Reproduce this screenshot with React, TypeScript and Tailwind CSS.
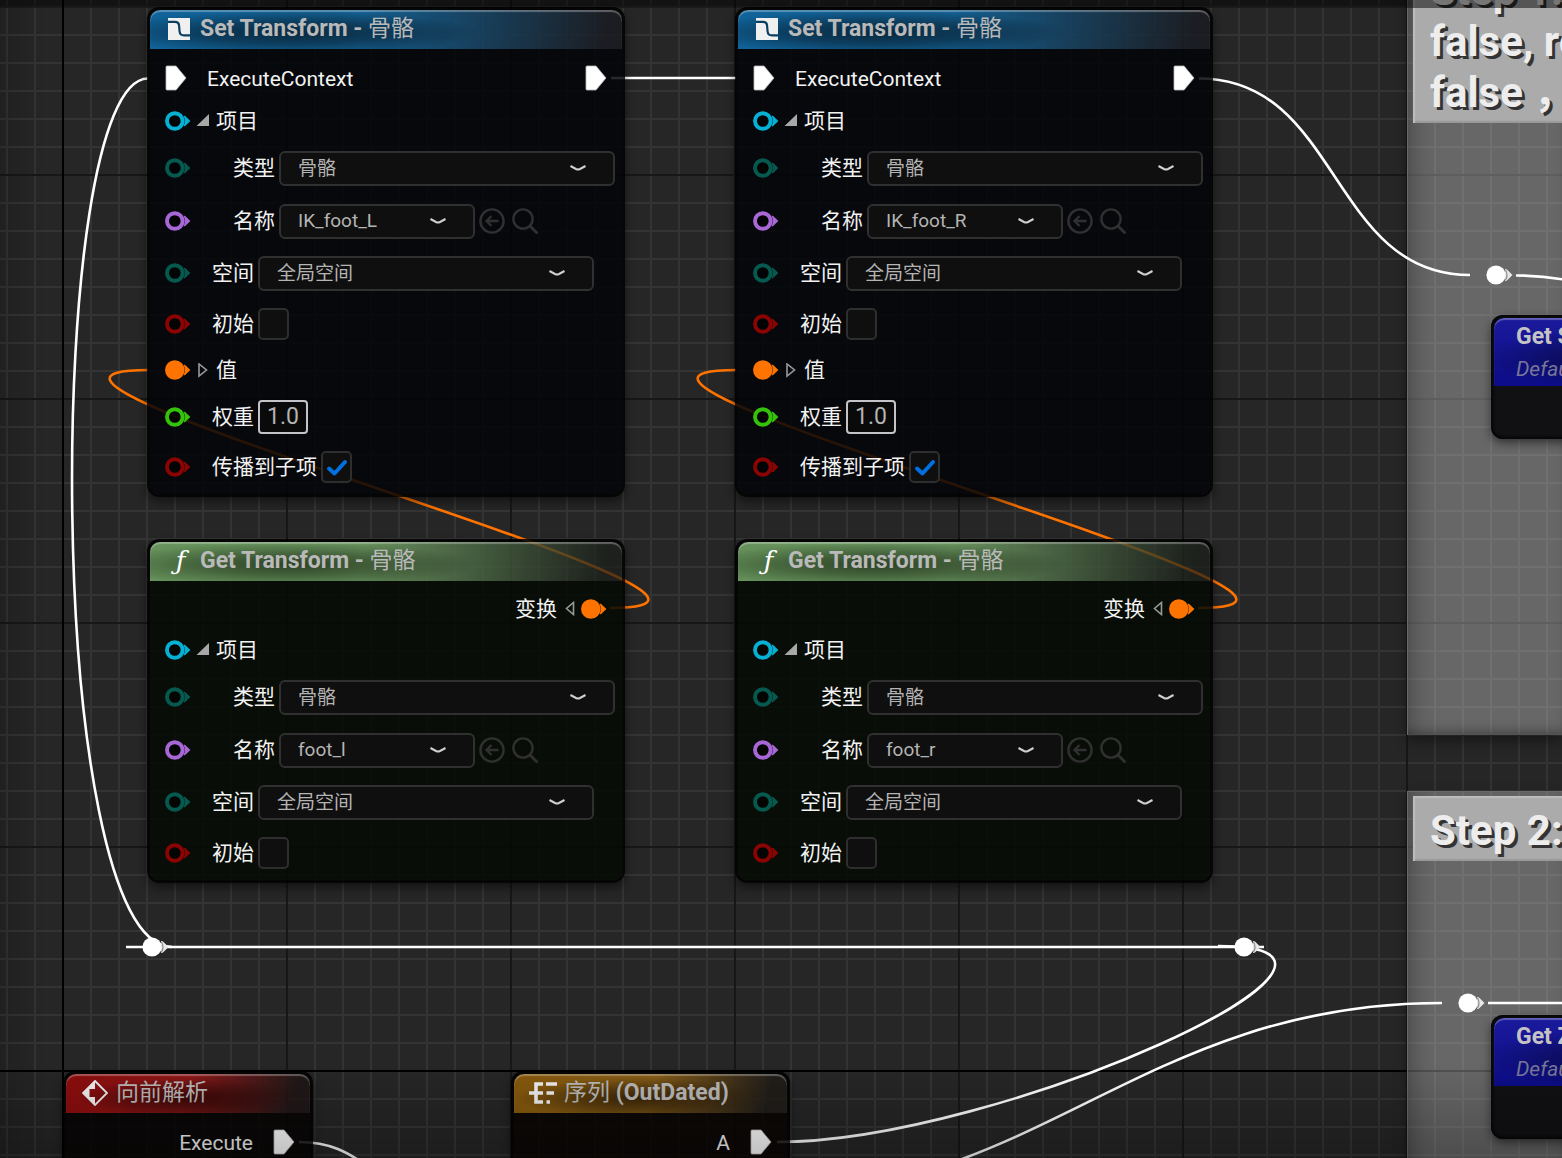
import { useId } from 'react'
import type { ReactNode } from 'react'

type PinColor = 'struct' | 'enum' | 'name' | 'bool' | 'transform' | 'float'

const pinColors: Record<PinColor, string> = {
  struct: 'text-[#06b0d4]',
  enum: 'text-[#06594f]',
  name: 'text-[#a867d6]',
  bool: 'text-[#8a0404]',
  transform: 'text-[#ff7300]',
  float: 'text-[#35c20a]',
}

function Pin({ color, filled = false }: { color: PinColor; filled?: boolean }) {
  return (
    <svg className={`h-[20px] w-[26px] shrink-0 ${pinColors[color]}`} viewBox="0 0 26 20" aria-hidden="true">
      <circle cx="9.8" cy="10" r="7.8" fill={filled ? 'currentColor' : 'rgba(0,0,0,0.6)'} stroke="currentColor" strokeWidth="3.9" />
      <path d="M18.6 4.6 L20.2 4.9 L25.4 10 L20.2 15.1 L18.6 15.4 Q20.8 10 18.6 4.6Z" fill="currentColor" />
    </svg>
  )
}

function ExecPin() {
  return (
    <svg className="h-[26px] w-[22px] shrink-0" viewBox="0 0 22 26" aria-hidden="true">
      <path d="M2 1 H11 L21 13 L11 25 H2 Q1 25 1 24 V2 Q1 1 2 1Z" fill="#fff" stroke="#bbb" strokeWidth="0.8" />
    </svg>
  )
}

function Chevron() {
  return (
    <svg className="pointer-events-none absolute top-1/2 right-[28px] h-[8px] w-[18px] -translate-y-1/2" viewBox="0 0 18 8" aria-hidden="true">
      <path d="M1.5 2 L7 5 Q9 6 11 5 L16.5 2" fill="none" stroke="#d0d0d0" strokeWidth="2" />
    </svg>
  )
}

function Row({ height, children }: { height: string; children: ReactNode }) {
  return <div className={`flex items-center px-[15px] whitespace-nowrap ${height}`}>{children}</div>
}

interface SelectRowProps {
  height: string
  pin: PinColor
  label: string
  value: string
  nested?: boolean
  picker?: boolean
}

function SelectRow({ height, pin, label, value, nested, picker }: SelectRowProps) {
  const id = useId()
  return (
    <Row height={height}>
      <Pin color={pin} />
      <label htmlFor={id} className={nested ? 'ml-[42px]' : 'ml-[21px]'}>
        {label}
      </label>
      <div className={`relative ml-[4px] h-[35px] shrink-0 ${picker ? 'w-[196px]' : 'w-[336px]'}`}>
        <select
          id={id}
          defaultValue={value}
          className={`h-full w-full appearance-none rounded-md border-2 border-[#303030] bg-[#0f0f0f] pl-[17px] text-[19px] text-[#b4b4b4] ${picker ? '' : 'pt-[2px]'}`}
        >
          <option>{value}</option>
        </select>
        <Chevron />
      </div>
      {picker && (
        <>
          <button type="button" aria-label="Use selected" className="ml-[4px] text-[#303030]">
            <svg className="h-[26px] w-[26px]" viewBox="0 0 26 26" fill="none" stroke="currentColor" strokeWidth="2.4">
              <circle cx="13" cy="13" r="11.6" />
              <path d="M19.5 13 H7.5 M12.5 8 L7.5 13 L12.5 18" />
            </svg>
          </button>
          <button type="button" aria-label="Browse" className="ml-[7px] text-[#303030]">
            <svg className="h-[26px] w-[26px]" viewBox="0 0 26 26" fill="none" stroke="currentColor" strokeWidth="2.4">
              <circle cx="11" cy="11" r="9.6" />
              <path d="M18 18 L25.5 25.5" strokeWidth="2.8" />
            </svg>
          </button>
        </>
      )}
    </Row>
  )
}

function CheckRow({ height, label, checked = false }: { height: string; label: string; checked?: boolean }) {
  const id = useId()
  return (
    <Row height={height}>
      <Pin color="bool" />
      <label htmlFor={id} className="ml-[21px]">
        {label}
      </label>
      <div className="relative ml-[4px] h-[32px] w-[31px]">
        <input
          id={id}
          type="checkbox"
          defaultChecked={checked}
          className="peer block h-full w-full appearance-none rounded-[5px] border-2 border-[#2e2e2e] bg-[#0f0f0f]"
        />
        <svg
          className="pointer-events-none absolute inset-0 hidden h-full w-full peer-checked:block"
          viewBox="0 0 31 32"
          fill="none"
          stroke="#0070e0"
          strokeWidth="4"
          strokeLinecap="round"
          strokeLinejoin="round"
        >
          <path d="M8 17.5 L13.5 22.5 L24 11" />
        </svg>
      </div>
    </Row>
  )
}

function ItemRow() {
  return (
    <Row height="h-[41px]">
      <Pin color="struct" />
      <button type="button" aria-label="Collapse" className="ml-[5px]">
        <svg className="h-[14px] w-[14px]" viewBox="0 0 14 14">
          <path d="M13 0 V12 H0.5Z" fill="#a8a8a8" />
        </svg>
      </button>
      <span className="ml-[6px]">项目</span>
    </Row>
  )
}

function ItemFields({ name }: { name: string }) {
  return (
    <>
      <ItemRow />
      <SelectRow height="h-[54px]" pin="enum" label="类型" value="骨骼" nested />
      <SelectRow height="h-[52px]" pin="name" label="名称" value={name} nested picker />
      <SelectRow height="h-[52px]" pin="enum" label="空间" value="全局空间" />
      <CheckRow height="h-[50px]" label="初始" />
    </>
  )
}

const headerColors = {
  blue: 'bg-[radial-gradient(ellipse_40%_56%_at_30%_58%,rgba(5,18,28,0.7),rgba(5,18,28,0.45)_50%,transparent),linear-gradient(100deg,#10639a_0%,#145f90_45%,rgba(26,28,34,0.85)_96%)]',
  green:
    'bg-[radial-gradient(ellipse_40%_56%_at_30%_58%,rgba(20,34,14,0.7),rgba(20,34,14,0.4)_50%,transparent),linear-gradient(100deg,#65915a_0%,#668f5c_45%,rgba(26,30,25,0.7)_96%)]',
  red: 'bg-[radial-gradient(ellipse_46%_52%_at_50%_62%,rgba(40,4,4,0.8),rgba(40,4,4,0.45)_50%,transparent),linear-gradient(105deg,#8c0c0c_0%,#8c1818_50%,rgba(32,22,22,0.85)_92%)]',
  gold: 'bg-[radial-gradient(ellipse_46%_52%_at_46%_62%,rgba(40,24,4,0.8),rgba(40,24,4,0.45)_50%,transparent),linear-gradient(105deg,#86590c_0%,#855c18_50%,rgba(32,28,24,0.85)_92%)]',
}

const bodyColors = {
  blue: 'bg-[#010408]/85',
  green: 'bg-[#040902]/85',
  red: 'bg-[#060202]/85',
  gold: 'bg-[#080401]/85',
}

interface NodeProps {
  place: string
  color: keyof typeof headerColors
  icon: ReactNode
  title: ReactNode
  children: ReactNode
}

function GraphNode({ place, color, icon, title, children }: NodeProps) {
  return (
    <section className={`absolute rounded-xl border-[3px] border-black/85 shadow-[0_5px_10px_rgba(0,0,0,0.45)] ${place}`}>
      <header
        className={`flex h-[39px] items-center rounded-t-[10px] pb-[2px] pl-[17px] shadow-[inset_0_2px_1px_rgba(255,255,255,0.3)] ${headerColors[color]}`}
      >
        <span className="flex w-[27px] shrink-0 items-center">{icon}</span>
        <h2 className="ml-[6px] text-[23px] font-bold whitespace-nowrap text-[#b9b9b9]">{title}</h2>
      </header>
      <div className={`rounded-b-[9px] pt-[7px] ${bodyColors[color]}`}>{children}</div>
    </section>
  )
}

function TransformIcon() {
  return (
    <svg className="ml-[1px] h-[22px] w-[22px]" viewBox="0 0 22 22">
      <path d="M0 0 H22 V22 H0Z" fill="#f0f0f0" />
      <path d="M0 3.8 H7 Q10.6 3.8 11 7 L11.6 13.5 Q12 17.4 16 17.4 H22" fill="none" stroke="#0c3f60" strokeWidth="2.2" />
    </svg>
  )
}

function FunctionIcon() {
  return <span className="w-full text-center font-['DejaVu_Serif'] text-[26px] leading-none text-white italic">ƒ</span>
}

function DiamondIcon() {
  return (
    <svg className="-ml-[1px] h-[26px] w-[26px]" viewBox="0 0 26 26">
      <path d="M13 1 L25 13 L13 25 L1 13Z" fill="none" stroke="#f0f0f0" strokeWidth="1.8" />
      <path d="M13 1 L1 13 L13 25 V17 H7.5 V9 H13Z" fill="#f0f0f0" />
    </svg>
  )
}

function SequenceIcon() {
  return (
    <svg className="-ml-[2px] h-[22px] w-[28px] shrink-0" viewBox="0 0 28 22" fill="none" stroke="#f0f0f0" strokeWidth="3.6">
      <path d="M0 11 H14 M14 2 H7 V20 H14 M17 2 H28 M17.5 11 H25 M17.5 20 H21" />
    </svg>
  )
}

function SetTransformNode({ place, name }: { place: string; name: string }) {
  const weightId = useId()
  return (
    <GraphNode
      place={place}
      color="blue"
      icon={<TransformIcon />}
      title={
        <>
          Set Transform - <span className="font-normal">骨骼</span>
        </>
      }
    >
      <Row height="h-[44px]">
        <ExecPin />
        <span className="ml-[20px] pt-[2px]">ExecuteContext</span>
        <span className="ml-auto flex">
          <ExecPin />
        </span>
      </Row>
      <ItemFields name={name} />
      <Row height="h-[42px]">
        <Pin color="transform" filled />
        <button type="button" aria-label="Expand" className="ml-[6px]">
          <svg className="h-[15px] w-[13px]" viewBox="0 0 13 15">
            <path d="M2 1 V13 L9.5 7Z" fill="none" stroke="#999" strokeWidth="1.6" />
          </svg>
        </button>
        <span className="ml-[6px]">值</span>
      </Row>
      <Row height="h-[52px]">
        <Pin color="float" />
        <label htmlFor={weightId} className="ml-[21px]">
          权重
        </label>
        <input
          id={weightId}
          type="text"
          defaultValue="1.0"
          className="ml-[4px] h-[34px] w-[50px] rounded-[4px] border-2 border-[#c4c4c8] bg-[#0a0a0a] pb-[2px] text-center text-[23px] text-[#b4b4b4]"
        />
      </Row>
      <CheckRow height="h-[48px]" label="传播到子项" checked />
      <div className="h-[3px]" />
    </GraphNode>
  )
}

function GetTransformNode({ place, name }: { place: string; name: string }) {
  return (
    <GraphNode
      place={place}
      color="green"
      icon={<FunctionIcon />}
      title={
        <>
          Get Transform - <span className="font-normal">骨骼</span>
        </>
      }
    >
      <Row height="h-[41px]">
        <span className="ml-auto">变换</span>
        <button type="button" aria-label="Expand" className="mr-[5px] ml-[6px]">
          <svg className="h-[15px] w-[13px]" viewBox="0 0 13 15">
            <path d="M10.5 1.5 V13.5 L3.5 7.5Z" fill="none" stroke="#999" strokeWidth="1.6" />
          </svg>
        </button>
        <Pin color="transform" filled />
      </Row>
      <ItemFields name={name} />
      <div className="h-[2px]" />
    </GraphNode>
  )
}

function VariableNode({ place, title }: { place: string; title: string }) {
  return (
    <section className={`absolute w-[300px] rounded-xl bg-[#111114] p-[3px] pb-[53px] shadow-[inset_0_0_3px_2px_#050508,0_4px_10px_rgba(0,0,0,0.5)] ${place}`}>
      <header className="h-[68px] rounded-t-[10px] bg-[radial-gradient(ellipse_50%_45%_at_46%_60%,rgba(8,8,50,0.9),transparent),linear-gradient(#1a1a9c,#0c0c88)] pt-[3px] pl-[22px] whitespace-nowrap shadow-[inset_0_2px_1px_rgba(255,255,255,0.3)]">
        <h2 className="text-[23px] leading-[32px] font-bold text-[#c4c4c4]">{title}</h2>
        <p className="text-[21px] leading-[33px] text-[#77779a] italic">Default</p>
      </header>
    </section>
  )
}

function CommentBox({ place, children }: { place: string; children: ReactNode }) {
  return (
    <section className={`absolute right-0 left-[1407px] border-t border-l border-[#6a6a6a] bg-[#cbcbcb]/40 pt-[4px] pl-[5px] shadow-[inset_16px_0_24px_-10px_rgba(0,0,0,0.25),inset_0_-8px_12px_-6px_rgba(0,0,0,0.35),0_6px_12px_rgba(0,0,0,0.4)] ${place}`}>
      <h1 className="overflow-hidden bg-[#ababab] pt-[9px] pb-[5px] pl-[17px] text-[42px] leading-[51px] font-bold whitespace-pre text-[#ededed] shadow-[inset_2px_2px_1px_#bdbdbd,inset_0_-2px_1px_#999] [text-shadow:3px_3px_0_#333]">
        {children}
      </h1>
    </section>
  )
}

function Reroute({ x, y }: { x: number; y: number }) {
  return (
    <g fill="#fff">
      <circle cx={x} cy={y} r="9.6" />
      <path d={`M${x + 9} ${y - 6} L${x + 11} ${y - 5.5} L${x + 16.5} ${y} L${x + 11} ${y + 5.5} L${x + 9} ${y + 6}Z`} fill="#e8e8e8" />
      <path d={`M${x + 9.5} ${y - 5} Q${x + 12.5} ${y} ${x + 9.5} ${y + 5}`} fill="none" stroke="#8a8a8a" strokeWidth="1.2" />
    </g>
  )
}

function Wires() {
  return (
    <svg className="absolute inset-0 h-full w-full" fill="none" strokeWidth="2.6" aria-hidden="true">
      <g stroke="#fff">
        <path d="M611 78 H736" />
        <path d="M1199 78.5 C1340 78.5 1330 275 1470 275" />
        <path d="M1516 275.5 Q1542 275.5 1566 280" />
        <path d="M148 78.5 C43 78.5 43 947 172 947" />
        <path d="M126 947 H1264" />
        <path d="M777 1142 C1000 1142 1430 946 1218 946" />
        <path d="M777 1194 C1040 1192 1145 1003 1442 1003" />
        <path d="M1488 1003 H1600" />
        <path d="M299 1142 C330 1142 348 1152 370 1168" />
      </g>
      <g stroke="#ff7300">
        <path d="M148 370 C-87 370 845 608 610 608" />
        <path d="M736 370 C501 370 1433 608 1198 608" />
      </g>
      <Reroute x={152} y={947} />
      <Reroute x={1244} y={947} />
      <Reroute x={1496} y={275} />
      <Reroute x={1468} y={1003} />
    </svg>
  )
}

function Grid() {
  return (
    <svg className="absolute inset-0 h-full w-full" aria-hidden="true">
      <defs>
        <pattern id="minor" x="8" y="8" width="28" height="28" patternUnits="userSpaceOnUse">
          <path d="M0 27 H28 M27 0 V28" stroke="#343434" strokeWidth="2" />
        </pattern>
        <pattern id="major" x="64" y="176" width="224" height="224" patternUnits="userSpaceOnUse">
          <path d="M0 223 H224 M223 0 V224" stroke="#171717" strokeWidth="2" />
        </pattern>
      </defs>
      <rect width="100%" height="100%" fill="#262626" />
      <rect width="100%" height="100%" fill="url(#minor)" />
      <rect width="100%" height="100%" fill="url(#major)" />
      <path d="M63 0 V4000 M0 1071 H4000" stroke="#000" strokeWidth="2" />
    </svg>
  )
}

export default function App() {
  return (
    <main className="relative h-screen overflow-hidden bg-[#262626] font-[Roboto,'Noto_Sans_CJK_SC',sans-serif] text-[21px] leading-[26px] text-[#f2f2f2]">
      <Grid />
      <CommentBox place="-top-[49px] h-[784px]">{'Step 1:\nfalse, re\nfalse ，'}</CommentBox>
      <CommentBox place="top-[791px] h-[600px]">Step 2:</CommentBox>
      <Wires />

      <SetTransformNode place="left-[147px] top-[7px] w-[478px]" name="IK_foot_L" />
      <SetTransformNode place="left-[735px] top-[7px] w-[478px]" name="IK_foot_R" />
      <GetTransformNode place="left-[147px] top-[539px] w-[478px]" name="foot_l" />
      <GetTransformNode place="left-[735px] top-[539px] w-[478px]" name="foot_r" />

      <VariableNode place="left-[1491px] top-[315px]" title="Get S" />
      <VariableNode place="left-[1491px] top-[1015px]" title="Get Z" />

      <GraphNode
        place="left-[63px] top-[1071px] w-[250px]"
        color="red"
        icon={<DiamondIcon />}
        title={<span className="font-normal">向前解析</span>}
      >
        <Row height="h-[44px]">
          <span className="mr-[20px] ml-auto pt-[2px]">Execute</span>
          <ExecPin />
        </Row>
      </GraphNode>
      <GraphNode
        place="left-[511px] top-[1071px] w-[279px]"
        color="gold"
        icon={<SequenceIcon />}
        title={
          <>
            <span className="font-normal">序列</span> (OutDated)
          </>
        }
      >
        <Row height="h-[44px]">
          <span className="mr-[20px] ml-auto pt-[2px]">A</span>
          <ExecPin />
        </Row>
      </GraphNode>

      <div className="pointer-events-none absolute inset-x-0 top-0 h-[8px] bg-black/50" />
      <div className="pointer-events-none absolute inset-x-0 bottom-0 h-24 bg-linear-to-t from-black/25 to-transparent" />
      <div className="pointer-events-none absolute inset-y-0 left-0 w-12 bg-linear-to-r from-black/15 to-transparent" />
    </main>
  )
}
